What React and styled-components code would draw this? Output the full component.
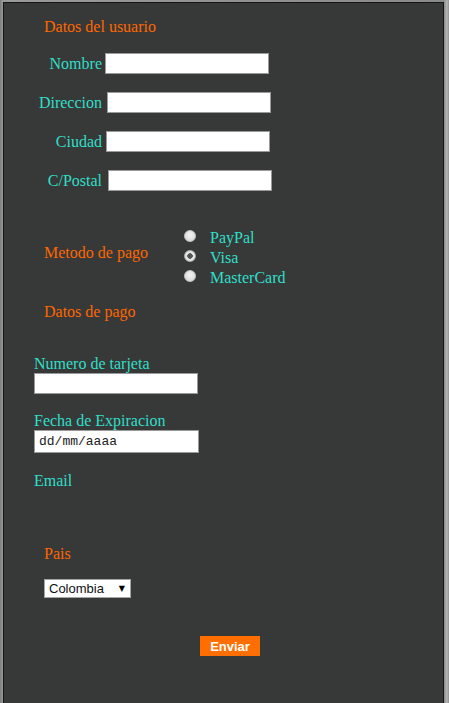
import React, { useState } from "react";
import styled, { createGlobalStyle } from "styled-components";

const GlobalStyle = createGlobalStyle`
  html, body {
    margin: 0;
    padding: 0;
    background: #8e8e8e;
  }
  body {
    font-family: "Liberation Serif", "Times New Roman", serif;
    font-size: 16px;
    overflow: hidden;
  }
`;

// Outer grey frame
const Page = styled.div`
  padding: 2px 5px 0 3px;
  height: 703px;
  box-sizing: border-box;
  background: linear-gradient(to right, #7d7d7d 0, #9a9a9a 3px, #8a8a8a 444px, #b5b5b5 447px, #8f8f8f 449px);
`;

const Form = styled.form`
  background: #373938;
  border: 1px solid #141414;
  border-bottom: none;
  height: 720px;
  padding-top: 15px;
  box-sizing: border-box;
`;

const Heading = styled.div`
  color: #ff6600;
  line-height: 18px;
  margin: ${(p) => p.$mt || 0}px 0 0 40px;
`;

const UserGrid = styled.div`
  display: grid;
  grid-template-columns: 98px 164px;
  column-gap: 3px;
  row-gap: 18px;
  margin-top: 17px;
  align-items: center;
`;

const FieldLabel = styled.label`
  color: #30dfc8;
  text-align: right;
  line-height: 18px;
`;

const TextInput = styled.input`
  width: 164px;
  height: 21px;
  box-sizing: border-box;
  border: 1px solid #9a9a9a;
  background: #fff;
  padding: 1px 3px;
  font-family: "Liberation Mono", monospace;
  font-size: 13px;
  margin-left: ${(p) => p.$shift || 0}px;
  &::placeholder {
    color: #222;
  }
`;

const PayRow = styled.div`
  display: flex;
  align-items: center;
  margin-top: 37px;
`;

const PayLabel = styled.div`
  color: #ff6600;
  line-height: 18px;
  width: 140px;
  padding-left: 40px;
  padding-bottom: 10px;
`;

const RadioList = styled.div`
  display: flex;
  flex-direction: column;
`;

const RadioRow = styled.label`
  display: flex;
  align-items: center;
  height: 20px;
  color: #30dfc8;
  line-height: 18px;
`;

const Radio = styled.input`
  appearance: none;
  margin: 0 14px 0 0;
  width: 12px;
  height: 12px;
  border-radius: 50%;
  background: radial-gradient(circle at 50% 40%, #f4f4f4, #d2d2d2);
  border: 1px solid #c4c4c4;
  box-sizing: border-box;
  position: relative;
  top: -2px;
  &:checked {
    background: radial-gradient(circle, #555 0 2.5px, #e6e6e6 3px);
    border-color: #aaa;
  }
`;

const Stack = styled.div`
  display: flex;
  flex-direction: column;
  margin: ${(p) => p.$mt || 0}px 0 0 30px;
`;

const StackLabel = styled.label`
  color: #30dfc8;
  line-height: 18px;
`;

const DateInput = styled(TextInput)`
  height: 23px;
  width: 165px;
  padding-left: 4px;
  color: #222;
`;

const SelectBox = styled.div`
  display: flex;
  align-items: center;
  width: 87px;
  height: 19px;
  box-sizing: border-box;
  border: 1px solid #a5a5a5;
  background: #fff;
  margin: 16px 0 0 40px;
`;

const Select = styled.select`
  appearance: none;
  border: none;
  outline: none;
  background: transparent;
  font-family: "Liberation Sans", Arial, sans-serif;
  font-size: 13px;
  color: #111;
  padding: 0 0 0 4px;
  flex: 1;
  height: 17px;
`;

const Arrow = styled.span`
  font-family: "DejaVu Sans", sans-serif;
  font-size: 8px;
  color: #000;
  margin-right: 5px;
`;

const SubmitButton = styled.button`
  display: block;
  margin: 38px 0 0 196px;
  width: 60px;
  height: 20px;
  border: none;
  padding: 0;
  background: #ff6e00;
  color: #fff;
  font-family: "Liberation Sans", Arial, sans-serif;
  font-weight: bold;
  font-size: 13px;
`;

const userFields = [
  { label: "Nombre", inputShift: 0 },
  { label: "Direccion", inputShift: 2 },
  { label: "Ciudad", inputShift: 1 },
  { label: "C/Postal", inputShift: 3 },
];

const PaymentForm = () => {
  const [method, setMethod] = useState("Visa");
  const [country, setCountry] = useState("Colombia");

  return (
    <Page>
      <GlobalStyle />
      <Form onSubmit={(e) => e.preventDefault()}>
        <Heading>Datos del usuario</Heading>
        <UserGrid>
          {userFields.map((f) => (
            <React.Fragment key={f.label}>
              <FieldLabel>{f.label}</FieldLabel>
              <TextInput type="text" $shift={f.inputShift} />
            </React.Fragment>
          ))}
        </UserGrid>

        <PayRow>
          <PayLabel>Metodo de pago</PayLabel>
          <RadioList>
            {["PayPal", "Visa", "MasterCard"].map((m) => (
              <RadioRow key={m}>
                <Radio
                  type="radio"
                  name="pago"
                  checked={method === m}
                  onChange={() => setMethod(m)}
                />
                {m}
              </RadioRow>
            ))}
          </RadioList>
        </PayRow>

        <Heading $mt={15}>Datos de pago</Heading>

        <Stack $mt={34}>
          <StackLabel>Numero de tarjeta</StackLabel>
          <TextInput type="text" />
        </Stack>
        <Stack $mt={18}>
          <StackLabel>Fecha de Expiracion</StackLabel>
          <DateInput type="text" placeholder="dd/mm/aaaa" />
        </Stack>
        <Stack $mt={19}>
          <StackLabel>Email</StackLabel>
        </Stack>

        <Heading $mt={55}>Pais</Heading>
        <SelectBox>
          <Select value={country} onChange={(e) => setCountry(e.target.value)}>
            <option>Colombia</option>
            <option>Mexico</option>
            <option>España</option>
          </Select>
          <Arrow>▼</Arrow>
        </SelectBox>

        <SubmitButton type="submit">Enviar</SubmitButton>
      </Form>
    </Page>
  );
};

export default PaymentForm;
